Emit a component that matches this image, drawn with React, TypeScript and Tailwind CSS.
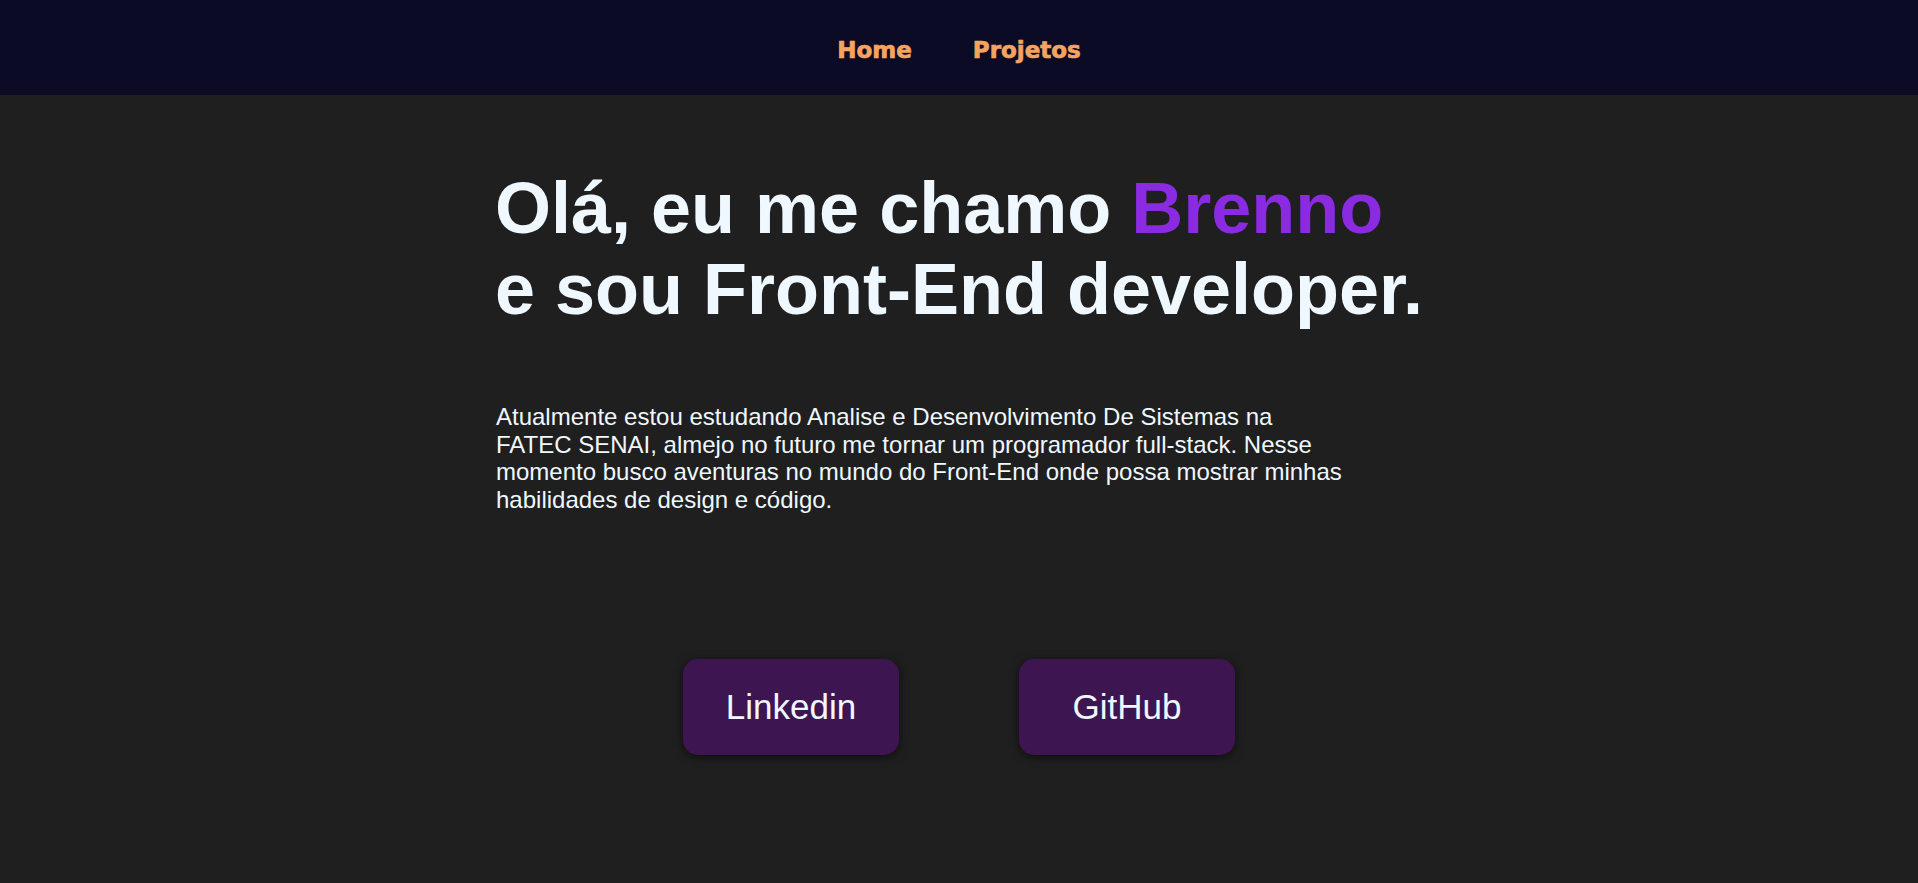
import React from 'react';

const links = [
  { label: 'Linkedin', href: '#' },
  { label: 'GitHub', href: '#' },
];

export default function App() {
  return (
    <div className="min-h-screen bg-[#1f1f1f] font-['Liberation_Sans',Arial,sans-serif] text-[#f0f8ff]">
      {/* Header / nav */}
      <header className="h-[95px] bg-[#0b0b25] flex items-center justify-center pt-[5px]">
        <nav className="flex items-center gap-[61px] font-['DejaVu_Sans',sans-serif] font-bold text-[23px] text-[#f4a460] [-webkit-text-stroke:0.7px_#f4a460]">
          <a href="#">Home</a>
          <a href="#">Projetos</a>
        </nav>
      </header>

      <main className="w-[930px] mx-auto">
        {/* Hero */}
        <h1 className="mt-[73px] pl-[1px] text-[72px] leading-[81px] font-bold">
          Olá, eu me chamo <span className="text-[#8a2be2]">Brenno</span>
          <br />
          e sou Front-End developer.
        </h1>

        <p className="mt-[73px] pl-[2px] w-[852px] text-[24px] leading-[1.15]">
          Atualmente estou estudando Analise e Desenvolvimento De Sistemas na FATEC SENAI, almejo no futuro me
          tornar um programador full-stack. Nesse momento busco aventuras no mundo do Front-End onde possa
          mostrar minhas habilidades de design e código.
        </p>
      </main>

      {/* Links */}
      <div className="mt-[146px] flex justify-center gap-[120px]">
        {links.map((link) => (
          <a
            key={link.label}
            href={link.href}
            className="w-[216px] h-[96px] flex items-center justify-center rounded-[15px] bg-[#3d1551] text-[35px] text-[#f0f8ff] shadow-[0_2px_10px_rgba(0,0,0,0.6)]"
          >
            {link.label}
          </a>
        ))}
      </div>
    </div>
  );
}
